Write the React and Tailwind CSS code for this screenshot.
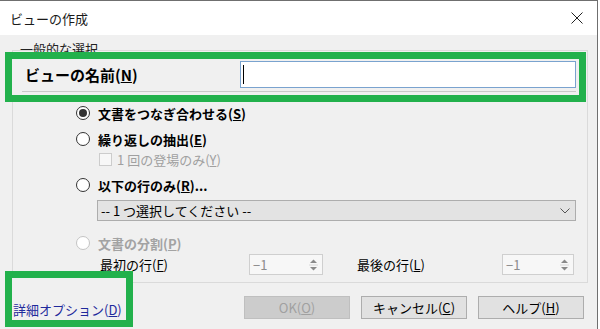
import React from 'react';

const GREEN = 'border-[#22b14c]';

const Radio = ({ checked, disabled }) => (
  <span
    className={`flex items-center justify-center w-[14px] h-[14px] rounded-full border bg-white shrink-0 ${
      disabled ? 'border-[#c4c4c4]' : 'border-[#333333]'
    }`}
  >
    {checked && <span className="w-[8px] h-[8px] rounded-full bg-[#333333]" />}
  </span>
);

const SpinArrows = () => (
  <svg width="9" height="16" viewBox="0 0 9 16" className="shrink-0">
    <path d="M1 6 L4.5 2.5 L8 6 Z" fill="#8a8a8a" />
    <path d="M1 10 L4.5 13.5 L8 10 Z" fill="#8a8a8a" />
    <line x1="0" y1="8" x2="9" y2="8" stroke="#d8d8d8" strokeWidth="1" />
  </svg>
);

const Spin = ({ width }) => (
  <div className={`flex items-center h-[21px] ${width} border border-[#cfcfcf] bg-[#f7f7f7] pl-[3px] pr-[4px]`}>
    <span className="flex-1 text-[13px] leading-none text-[#8c8c8c]">−1</span>
    <SpinArrows />
  </div>
);

export default function App() {
  return (
    <div className="w-[600px] h-[329px] overflow-hidden bg-white font-['Noto_Sans_CJK_JP','Noto_Sans',sans-serif] text-[#000000]">
      <div className="w-[598px] h-full border-t border-r border-[#6f6f6f] bg-[#f0f0f0] flex flex-col">

        {/* Title bar */}
        <div className="h-[34px] bg-white flex items-center justify-between pl-[10px] pr-[14px] shrink-0">
          <span className="text-[13px] leading-none text-[#1a1a1a]">ビューの作成</span>
          <svg width="12" height="12" viewBox="0 0 12 12">
            <path d="M0.5 0.5 L11.5 11.5 M11.5 0.5 L0.5 11.5" stroke="#222" strokeWidth="1" />
          </svg>
        </div>

        {/* Group box */}
        <div className="relative mt-[15px] ml-[12px] w-[576px] h-[233px] border border-[#dadada] flex flex-col shrink-0">
          <span className="absolute left-[7px] top-[-9px] text-[13px] leading-none text-[#222]">一般的な選択</span>

          {/* Highlighted name row */}
          <div className={`relative z-10 mt-[1px] ml-[-8px] w-[581px] h-[50px] border-[7px] ${GREEN} bg-[#f0f0f0] flex flex-col`}>
            <div className="h-[30px] flex items-center">
              <span className="w-[228px] pl-[13px] text-[15px] font-bold leading-none">
                ビューの名前(<span className="underline">N</span>)
              </span>
              <div className="w-[336px] h-[27px] border border-[#7aa3cf] bg-white flex items-center pl-[2px]">
                <span className="w-px h-[19px] bg-black" />
              </div>
            </div>
            <div className="mt-[2px] ml-[10px] w-[554px] h-px bg-[#c9c9c9]" />
          </div>

          {/* Options */}
          <div className="h-[22px] ml-[63px] flex items-center gap-[8px]">
            <Radio checked />
            <span className="text-[13px] font-bold leading-none">文書をつなぎ合わせる(<span className="underline">S</span>)</span>
          </div>
          <div className="mt-[4px] h-[22px] ml-[63px] flex items-center gap-[8px]">
            <Radio />
            <span className="text-[13px] font-bold leading-none">繰り返しの抽出(<span className="underline">E</span>)</span>
          </div>
          <div className="h-[18px] ml-[86px] flex items-center gap-[5px]">
            <span className="w-[13px] h-[13px] border border-[#cccccc] bg-[#f7f7f7]" />
            <span className="text-[13px] leading-none text-[#a0a0a0]">1 回の登場のみ(<span className="underline">Y</span>)</span>
          </div>
          <div className="mt-[6px] h-[22px] ml-[63px] flex items-center gap-[8px]">
            <Radio />
            <span className="text-[13px] font-bold leading-none">以下の行のみ(<span className="underline">R</span>)...</span>
          </div>
          <div className="mt-[4px] ml-[84px] w-[479px] h-[21px] border border-[#adadad] bg-[#e3e3e3] flex items-center justify-between pl-[3px] pr-[5px]">
            <span className="text-[13px] leading-none">-- 1 つ選択してください --</span>
            <svg width="10" height="6" viewBox="0 0 10 6">
              <path d="M0.5 0.5 L5 5 L9.5 0.5" fill="none" stroke="#555" strokeWidth="1" />
            </svg>
          </div>
          <div className="mt-[11px] h-[22px] ml-[63px] flex items-center gap-[8px]">
            <Radio disabled />
            <span className="text-[13px] font-bold leading-none text-[#a3a3a3]">文書の分割(<span className="underline">P</span>)</span>
          </div>
          <div className="h-[21px] ml-[87px] flex items-center">
            <span className="w-[149px] text-[13px] leading-none">最初の行(<span className="underline">F</span>)</span>
            <Spin width="w-[74px]" />
            <span className="ml-[34px] w-[145px] text-[13px] leading-none">最後の行(<span className="underline">L</span>)</span>
            <Spin width="w-[72px]" />
          </div>
        </div>

        {/* Footer */}
        <div className="flex items-start">
          <div className={`relative z-10 mt-[-12px] ml-[5px] w-[128px] h-[56px] border-[7px] ${GREEN} bg-[#f0f0f0] pt-[18px] pl-px`}>
            <span className="text-[13px] leading-none text-[#1f2a9c]">
              詳細オプション(<span className="underline">D</span>)
            </span>
          </div>
          <div className="ml-auto mr-[13px] mt-[13px] flex gap-[11px]">
            <div className="w-[106px] h-[23px] border border-[#bfbfbf] bg-[#cccccc] flex items-center justify-center text-[13px] leading-none text-[#a0a0a0]">
              OK(<span className="underline">O</span>)
            </div>
            <div className="w-[106px] h-[23px] border border-[#adadad] bg-[#e1e1e1] flex items-center justify-center text-[13px] leading-none">
              キャンセル(<span className="underline">C</span>)
            </div>
            <div className="w-[106px] h-[23px] border border-[#adadad] bg-[#e1e1e1] flex items-center justify-center text-[13px] leading-none">
              ヘルプ(<span className="underline">H</span>)
            </div>
          </div>
        </div>
      </div>
    </div>
  );
}
